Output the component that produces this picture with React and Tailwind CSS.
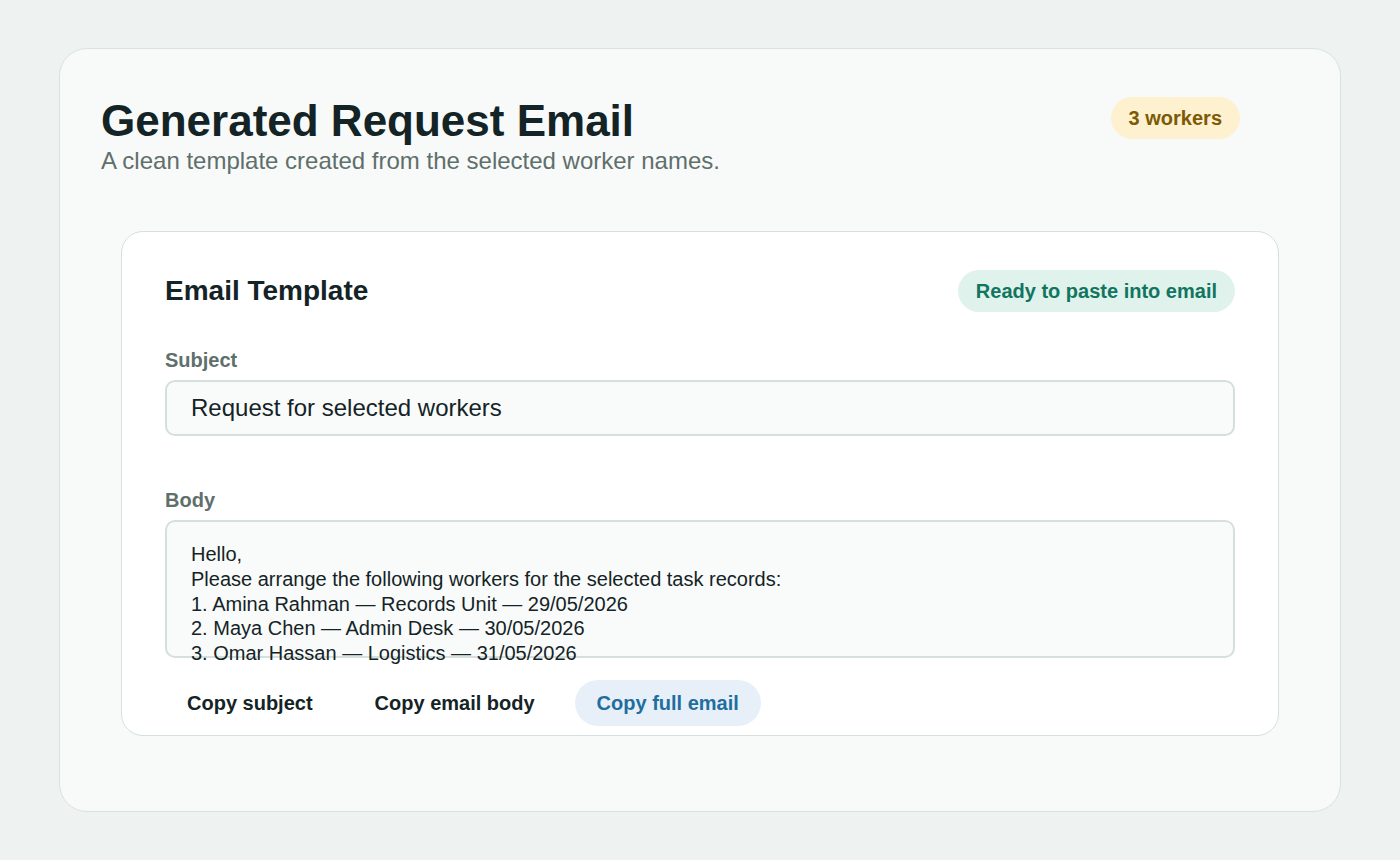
export default function App() {
  const lines = [
    "Hello,",
    "Please arrange the following workers for the selected task records:",
    "1. Amina Rahman — Records Unit — 29/05/2026",
    "2. Maya Chen — Admin Desk — 30/05/2026",
    "3. Omar Hassan — Logistics — 31/05/2026",
  ];
  return (
    <div className="min-h-[860px] bg-[#eef3f1] pt-[48px] px-[59px] pb-[48px]" style={{ fontFamily: '"Liberation Sans", Arial, sans-serif' }}>
      <div className="h-[764px] rounded-[28px] border border-[#d8e2df] bg-[#f8faf9] pt-[46px] px-[41px]">
        <div className="flex justify-between items-start">
          <div>
            <h1 className="text-[44px] leading-[52px] font-bold text-[#142326]">Generated Request Email</h1>
            <p className="text-[24px] leading-[28px] text-[#5f6f6c] mt-0">A clean template created from the selected worker names.</p>
          </div>
          <div className="mt-[2px] mr-[59px] h-[42px] px-[18px] rounded-full bg-[#fdf1cf] text-[#7c5a06] font-bold text-[20px] flex items-center">3 workers</div>
        </div>
        <div className="mt-[56px] mx-[20px] h-[505px] rounded-[22px] border border-[#d5dfdc] bg-white pt-[38px] px-[43px]">
          <div className="flex justify-between items-center">
            <h2 className="text-[28px] font-bold text-[#142326]">Email Template</h2>
            <div className="h-[42px] px-[18px] rounded-full bg-[#dff2ec] text-[#117560] font-bold text-[20px] flex items-center">Ready to paste into email</div>
          </div>
          <div className="mt-[36px] text-[20px] font-bold text-[#5f6f6c] leading-[24px]">Subject</div>
          <div className="mt-[8px] h-[56px] rounded-[10px] border-2 border-[#d5dfdc] bg-[#f9fbfa] px-[24px] flex items-center text-[24px] text-[#142326]">Request for selected workers</div>
          <div className="mt-[52px] text-[20px] font-bold text-[#5f6f6c] leading-[24px]">Body</div>
          <div className="mt-[8px] h-[138px] rounded-[10px] border-2 border-[#d5dfdc] bg-[#f9fbfa] px-[24px] pt-[20px] text-[20px] leading-[24.8px] text-[#142326]">
            {lines.map((l) => <div key={l}>{l}</div>)}
          </div>
          <div className="mt-[22px] flex gap-[18px] text-[20px] font-bold">
            <div className="h-[46px] px-[22px] flex items-center rounded-full text-[#142326]">Copy subject</div>
            <div className="h-[46px] px-[22px] flex items-center rounded-full text-[#142326]">Copy email body</div>
            <div className="h-[46px] px-[22px] flex items-center rounded-full bg-[#e7f0f8] text-[#1f6e9e]">Copy full email</div>
          </div>
        </div>
      </div>
    </div>
  );
}
